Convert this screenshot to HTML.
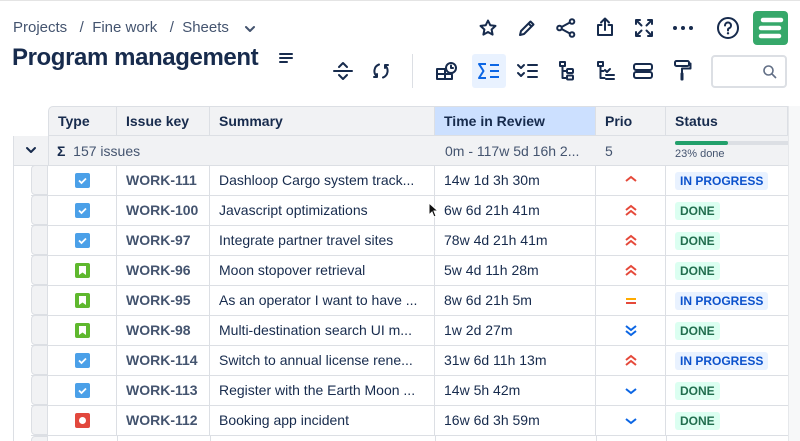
<!DOCTYPE html>
<html style="height:441px;overflow:hidden"><head><style>
*{margin:0;padding:0;box-sizing:border-box}
body{width:800px;height:441px;overflow:hidden;background:#fff;font-family:"Liberation Sans",sans-serif;color:#172b4d;position:relative}
.a{position:absolute}
svg{position:absolute;overflow:visible}
.ic{stroke:#172b4d;stroke-width:2;fill:none;stroke-linecap:round;stroke-linejoin:round}
.hd{position:absolute;top:106px;height:30px;background:#f1f2f4;border-right:1px solid #dcdfe4;border-bottom:1px solid #dcdfe4;font-weight:bold;font-size:14px;line-height:28px;padding-left:9px;color:#172b4d}
.row{position:absolute;left:31px;width:757px;height:30px;border-bottom:1px solid #dcdfe4}
.c{position:absolute;top:0;height:29px;line-height:29px;font-size:14px;border-right:1px solid #dcdfe4;padding-left:9px;white-space:nowrap;overflow:hidden}
.k{color:#44546f;font-weight:bold}
.lz{position:absolute;font-size:12px;font-weight:bold;height:18px;line-height:18px;padding:0 5px;border-radius:3px;top:6px}
.ip{background:#e9f2ff;color:#0c52cc}
.dn{background:#dcfff1;color:#216e4e}
.ty{position:absolute;left:27px;top:7px;width:15px;height:15px;border-radius:2px}
</style></head><body>
<div class="a" style="left:0;top:0;width:800px;height:1px;background:#e4e4e4"></div>
<div class="a" style="left:13px;top:19px;font-size:15px;color:#44546f">Projects &nbsp; / &nbsp;Fine work &nbsp; / &nbsp;Sheets</div>
<svg style="left:245px;top:26px" width="10" height="6"><path class="ic" style="stroke:#44546f" d="M1 1l4 4 4-4"/></svg>
<div class="a" style="left:12px;top:44px;font-size:24px;font-weight:bold;letter-spacing:-0.4px;color:#172b4d">Program management</div>
<svg style="left:279px;top:53px" width="14" height="12"><path class="ic" stroke-width="1.8" d="M1 1h12M1 5h12M1 9h7"/></svg>
<!-- top icons -->
<svg style="left:479px;top:19px" width="18" height="18"><path class="ic" d="M9 1.5l2.3 4.8 5.2.6-3.9 3.6 1 5.1L9 13l-4.6 2.6 1-5.1L1.5 6.9l5.2-.6z"/></svg>
<svg style="left:518px;top:19px" width="18" height="18"><path class="ic" d="M2 16l1-4L12.5 2.5l3 3L6 15zM10.5 4.5l3 3"/></svg>
<svg style="left:556px;top:18px" width="20" height="20"><circle class="ic" cx="16" cy="3.5" r="2.3"/><circle class="ic" cx="3.5" cy="10" r="2.3"/><circle class="ic" cx="16" cy="16.5" r="2.3"/><path class="ic" d="M5.6 9l8.3-4.5M5.6 11l8.3 4.5"/></svg>
<svg style="left:596px;top:17px" width="18" height="20"><path class="ic" d="M9 13V2M5 5.5L9 1.5l4 4M5.5 8H2v10h14V8h-3.5"/></svg>
<svg style="left:635px;top:19px" width="18" height="18"><path class="ic" d="M1 5V1h4M13 1h4v4M17 13v4h-4M5 17H1v-4M1.5 1.5l5 5M16.5 1.5l-5 5M16.5 16.5l-5-5M1.5 16.5l5-5"/></svg>
<svg style="left:673px;top:26px" width="20" height="4"><circle cx="2" cy="2" r="2" fill="#172b4d"/><circle cx="10" cy="2" r="2" fill="#172b4d"/><circle cx="18" cy="2" r="2" fill="#172b4d"/></svg>
<svg style="left:717px;top:17px" width="22" height="22"><circle class="ic" cx="11" cy="11" r="10"/><path class="ic" d="M8 8.5a3 3 0 1 1 4 2.8c-.7.3-1 .8-1 1.6v.6"/><circle cx="11" cy="16.3" r="1.2" fill="#172b4d"/></svg>
<div class="a" style="left:753px;top:11px;width:35px;height:34px;background:#36a86a;border-radius:4px"></div>
<svg style="left:757px;top:15px" width="28" height="26"><path d="M6 5h18M4 13h18M4 21h18" stroke="#fff" stroke-width="4.5" stroke-linecap="round"/></svg>
<!-- toolbar -->
<svg style="left:333px;top:61px" width="20" height="20"><path class="ic" d="M1 10h18M6 6l4-4 4 4M6 14l4 4 4-4"/></svg>
<svg style="left:372px;top:62px" width="18" height="18"><path class="ic" d="M7 2.5a7 7 0 0 0-2 12M5 15H2M5 15v-3M11 15.5a7 7 0 0 0 2-12M13 3h3M13 3v3"/></svg>
<div class="a" style="left:412px;top:54px;width:1px;height:34px;background:#dcdfe4"></div>
<svg style="left:436px;top:61px" width="22" height="20"><path class="ic" d="M1 8h8v10H1zM9 13h7M9 18h7v-4M1 13h8"/><circle class="ic" cx="15" cy="7" r="5"/><path class="ic" d="M15 4.5V7h2"/></svg>
<div class="a" style="left:472px;top:54px;width:34px;height:34px;background:#e9f2ff;border-radius:3px"></div>
<svg style="left:478px;top:63px" width="22" height="16"><path d="M8 1H1l4.5 7L1 15h7" stroke="#0c66e4" stroke-width="2" fill="none" stroke-linejoin="round"/><path d="M12 2h9M12 8h9M12 14h9" stroke="#0c66e4" stroke-width="2"/></svg>
<svg style="left:517px;top:63px" width="22" height="16"><path class="ic" d="M1 2l3 3 3-3M1 10l3 3 3-3M11 2h9M11 8h9M11 14h9"/></svg>
<svg style="left:559px;top:61px" width="16" height="20"><path class="ic" d="M1 1h5v4H1zM3.5 5v12h4M3.5 10h4"/><rect class="ic" x="8" y="8" width="6" height="4" rx="1"/><rect class="ic" x="8" y="14.5" width="6" height="4" rx="1"/></svg>
<svg style="left:597px;top:61px" width="18" height="20"><path class="ic" d="M1 1h5v4H1zM3.5 5v12h4M3.5 10h3M8 9l2 2 3-3M9 14h8M9 18h8"/></svg>
<svg style="left:633px;top:63px" width="20" height="16"><rect class="ic" x="1" y="1" width="18" height="6" rx="2"/><rect class="ic" x="1" y="9" width="18" height="6" rx="2"/></svg>
<svg style="left:674px;top:60px" width="18" height="22"><rect class="ic" x="1" y="1" width="14" height="5" rx="1.5"/><path class="ic" d="M15 3.5h1.5v5H8v4"/><rect x="6.5" y="12.5" width="3" height="8" rx="1" fill="#172b4d"/></svg>
<div class="a" style="left:711px;top:55px;width:76px;height:33px;border:2px solid #dcdfe4;border-radius:4px"></div>
<svg style="left:763px;top:65px" width="14" height="14"><circle cx="5.5" cy="5.5" r="4.5" stroke="#626f86" stroke-width="1.6" fill="none"/><path d="M9 9l4 4" stroke="#626f86" stroke-width="1.6"/></svg>
<!-- table -->
<div class="a" style="left:788px;top:106px;width:12px;height:335px;background:#f7f8f9;border-left:1px solid #e6e8eb"></div>
<div class="hd" style="left:48px;width:69px;border-left:1px solid #dcdfe4;border-top:1px solid #dcdfe4;border-radius:5px 0 0 0">Type</div>
<div class="hd" style="left:117px;width:93px;border-top:1px solid #dcdfe4">Issue key</div>
<div class="hd" style="left:210px;width:225px;border-top:1px solid #dcdfe4">Summary</div>
<div class="hd" style="left:435px;width:161px;background:#cce0ff;border-top:1px solid #dcdfe4">Time in Review</div>
<div class="hd" style="left:596px;width:70px;border-top:1px solid #dcdfe4">Prio</div>
<div class="hd" style="left:666px;width:122px;border-top:1px solid #dcdfe4">Status</div>
<!-- group row -->
<div class="a" style="left:13px;top:136px;width:775px;height:30px;background:#f1f2f4;border:1px solid #dcdfe4;border-right:none;border-top:none"></div>
<div class="a" style="left:48px;top:136px;width:1px;height:30px;background:#dcdfe4"></div>
<svg style="left:26px;top:147px" width="10" height="6"><path class="ic" d="M1 1l4 4 4-4"/></svg>
<div class="a" style="left:57px;top:143px;font-size:14px;color:#44546f"><b style="color:#172b4d">Σ</b>&nbsp; 157 issues</div>
<div class="a" style="left:445px;top:143px;font-size:14px;color:#44546f">0m - 117w 5d 16h 2...</div>
<div class="a" style="left:605px;top:143px;font-size:14px;color:#44546f">5</div>
<div class="a" style="left:675px;top:141px;width:113px;height:4px;background:#dcdfe4"></div>
<div class="a" style="left:675px;top:141px;width:53px;height:4px;background:#22a06b;border-radius:2px"></div>
<div class="a" style="left:675px;top:148px;font-size:11px;color:#44546f">23% done</div>
<div class="a" style="left:13px;top:166px;width:1px;height:275px;background:#dcdfe4"></div>

<div id="rows"></div>
<script>
const R=[["b","WORK-111","Dashloop Cargo system track...","14w 1d 3h 30m","h","IN PROGRESS"],
["b","WORK-100","Javascript optimizations","6w 6d 21h 41m","hh","DONE"],
["b","WORK-97","Integrate partner travel sites","78w 4d 21h 41m","hh","DONE"],
["g","WORK-96","Moon stopover retrieval","5w 4d 11h 28m","hh","DONE"],
["g","WORK-95","As an operator I want to have ...","8w 6d 21h 5m","m","IN PROGRESS"],
["g","WORK-98","Multi-destination search UI m...","1w 2d 27m","ll","DONE"],
["b","WORK-114","Switch to annual license rene...","31w 6d 11h 13m","hh","IN PROGRESS"],
["b","WORK-113","Register with the Earth Moon ...","14w 5h 42m","l","DONE"],
["r","WORK-112","Booking app incident","16w 6d 3h 59m","l","DONE"]];
let h="";
R.forEach((r,i)=>{const t=166+i*30;
let ty=r[0]=="b"?'<div class="ty" style="background:#4ba0e8"><svg style="left:3px;top:3px" width="9" height="9"><path d="M1 4.5l2.5 2.5 4.5-4.5" stroke="#fff" stroke-width="1.8" fill="none"/></svg></div>':
r[0]=="g"?'<div class="ty" style="background:#5fb82e"><svg style="left:4px;top:3px" width="7" height="9"><path d="M0 0h7v9L3.5 6.5 0 9z" fill="#fff"/></svg></div>':
r[0]=="r"?'<div class="ty" style="background:#e2483d"><div class="a" style="left:4px;top:4px;width:7px;height:7px;border-radius:4px;background:#fff"></div></div>':'';
let p=r[4],ps="";
if(p=="h")ps='<path d="M1 6l5-4 5 4" stroke="#e5493a" stroke-width="2" fill="none"/>';
if(p=="hh")ps='<path d="M1 5l5-4 5 4M1 10l5-4 5 4" stroke="#e5493a" stroke-width="2" fill="none"/>';
if(p=="m")ps='<path d="M1 4h10" stroke="#ffab00" stroke-width="2"/><path d="M1 8h10" stroke="#e5493a" stroke-width="2"/>';
if(p=="ll")ps='<path d="M1 1l5 4 5-4M1 6l5 4 5-4" stroke="#0c66e4" stroke-width="2" fill="none"/>';
if(p=="l")ps='<path d="M1 4l5 4 5-4" stroke="#0c66e4" stroke-width="2" fill="none"/>';
h+=`<div class="row" style="top:${t}px">
<div class="c" style="left:0;width:17px;background:#f1f2f4;border:1px solid #dcdfe4;border-radius:4px 0 0 4px;height:30px;top:-1px"></div>
<div class="c" style="left:17px;width:69px">${ty}</div>
<div class="c k" style="left:86px;width:93px">${r[1]}</div>
<div class="c" style="left:179px;width:225px">${r[2]}</div>
<div class="c" style="left:404px;width:161px">${r[3]}</div>
<div class="c" style="left:565px;width:70px">${ps?'<svg style="left:29px;top:9px" width="12" height="12">'+ps+'</svg>':''}</div>
<div class="c" style="left:635px;width:122px;border-right:none">${r[5]?'<span class="lz '+(r[5]=="DONE"?"dn":"ip")+'" style="left:9px">'+r[5]+'</span>':''}</div></div>`;});
document.getElementById("rows").innerHTML=h;
</script>
<div class="a" style="left:31px;top:436px;width:757px;height:5px;overflow:hidden">
<div class="a" style="left:0;top:0;width:17px;height:10px;background:#f1f2f4;border:1px solid #dcdfe4;border-radius:4px 0 0 0"></div>
<div class="a" style="left:86px;top:0;width:1px;height:5px;background:#dcdfe4"></div>
<div class="a" style="left:179px;top:0;width:1px;height:5px;background:#dcdfe4"></div>
<div class="a" style="left:404px;top:0;width:1px;height:5px;background:#dcdfe4"></div>
<div class="a" style="left:565px;top:0;width:1px;height:5px;background:#dcdfe4"></div>
<div class="a" style="left:635px;top:0;width:1px;height:5px;background:#dcdfe4"></div>
</div>
<svg style="left:428px;top:202px" width="10" height="16"><path d="M1 1v12l3-3 2 5 2-1-2-5h4z" fill="#111" stroke="#fff" stroke-width="1"/></svg>
</body></html>
